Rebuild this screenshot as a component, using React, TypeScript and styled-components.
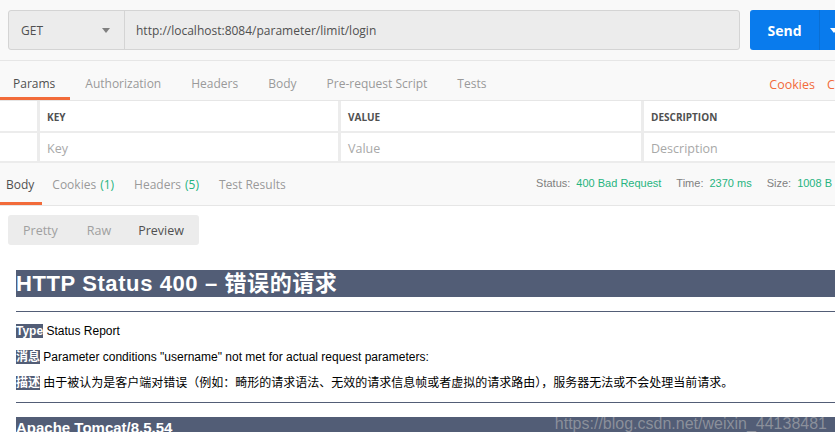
import styled, { createGlobalStyle } from "styled-components";

const GlobalStyle = createGlobalStyle`
  html, body {
    margin: 0;
    padding: 0;
    background: #ffffff;
    overflow: hidden;
  }
  * { box-sizing: border-box; }
`;

const requestTabs = ["Params", "Authorization", "Headers", "Body", "Pre-request Script", "Tests"];

export default function App() {
  return (
    <>
      <GlobalStyle />
      <Page>
        <TopBar>
          <UrlGroup>
            <MethodSelect>
              GET
              <Caret />
            </MethodSelect>
            <UrlText>http://localhost:8084/parameter/limit/login</UrlText>
          </UrlGroup>
          <SendGroup>
            <SendLabel>Send</SendLabel>
            <SendArrow>
              <Caret $color="#ffffff" />
            </SendArrow>
          </SendGroup>
        </TopBar>

        <TabRow>
          {requestTabs.map((t, i) => (
            <Tab key={t} $active={i === 0}>{t}</Tab>
          ))}
          <TabLinks>
            <OrangeLink>Cookies</OrangeLink>
            <OrangeLink>Code</OrangeLink>
          </TabLinks>
        </TabRow>

        <ParamTable>
          <Cell />
          <HeadCell>KEY</HeadCell>
          <HeadCell>VALUE</HeadCell>
          <HeadCell>DESCRIPTION</HeadCell>
          <Cell />
          <InputCell>Key</InputCell>
          <InputCell>Value</InputCell>
          <InputCell>Description</InputCell>
        </ParamTable>

        <ResponseBar>
          <ResponseTabs>
            <RespTab $active>Body</RespTab>
            <RespTab>Cookies <Count>(1)</Count></RespTab>
            <RespTab>Headers <Count>(5)</Count></RespTab>
            <RespTab>Test Results</RespTab>
          </ResponseTabs>
          <Meta>
            <MetaLabel>Status:</MetaLabel><MetaValue>400 Bad Request</MetaValue>
            <MetaLabel>Time:</MetaLabel><MetaValue>2370 ms</MetaValue>
            <MetaLabel>Size:</MetaLabel><MetaValue>1008 B</MetaValue>
          </Meta>
        </ResponseBar>

        <ResponseBody>
          <ViewToggle>
            <ViewOption>Pretty</ViewOption>
            <ViewOption>Raw</ViewOption>
            <ViewOption $active>Preview</ViewOption>
          </ViewToggle>

          <Preview>
            <ErrorTitle>HTTP Status 400 – 错误的请求</ErrorTitle>
            <Rule $top={14} $bottom={12} />
            <Para><Label>Type</Label> Status Report</Para>
            <Para><Label>消息</Label> Parameter conditions "username" not met for actual request parameters: </Para>
            <Para><Label>描述</Label> 由于被认为是客户端对错误（例如：畸形的请求语法、无效的请求信息帧或者虚拟的请求路由），服务器无法或不会处理当前请求。</Para>
            <Rule $top={2} $bottom={14} />
            <Footer>Apache Tomcat/8.5.54</Footer>
            <Watermark>https://blog.csdn.net/weixin_44138481</Watermark>
          </Preview>
        </ResponseBody>
      </Page>
    </>
  );
}

const Page = styled.div`
  width: 835px;
  height: 432px;
  overflow: hidden;
  font-family: "Open Sans", "Noto Sans", sans-serif;
  color: #505050;
`;

const TopBar = styled.div`
  display: flex;
  gap: 10px;
  height: 61px;
  padding: 10px 0 10px 8px;
  background: #f9f9f9;
  border-bottom: 1px solid #e6e6e6;
`;

const UrlGroup = styled.div`
  display: flex;
  flex: 0 0 732px;
  height: 40px;
  background: #ececec;
  border: 1px solid #d4d4d4;
  border-radius: 3px;
`;

const MethodSelect = styled.div`
  display: flex;
  align-items: center;
  justify-content: space-between;
  width: 116px;
  padding: 0 14px 0 12px;
  border-right: 1px solid #d4d4d4;
  font-size: 12px;
  color: #505050;
`;

const Caret = styled.span<{ $color?: string }>`
  width: 0;
  height: 0;
  border-left: 4px solid transparent;
  border-right: 4px solid transparent;
  border-top: 5px solid ${(p) => p.$color ?? "#808080"};
`;

const UrlText = styled.div`
  display: flex;
  align-items: center;
  padding-left: 11px;
  font-size: 12px;
  color: #505050;
`;

const SendGroup = styled.div`
  display: flex;
  flex: 0 0 100px;
  height: 40px;
  background: #097bed;
  border-radius: 3px;
  color: #ffffff;
`;

const SendLabel = styled.div`
  display: flex;
  align-items: center;
  justify-content: center;
  width: 70px;
  font-size: 14px;
  font-weight: 700;
  border-right: 1px solid #0a6fd4;
`;

const SendArrow = styled.div`
  display: flex;
  align-items: center;
  padding-left: 10px;
`;

const TabRow = styled.div`
  display: flex;
  height: 40px;
  background: #f9f9f9;
  border-bottom: 1px solid #e6e6e6;
`;

const Tab = styled.div<{ $active?: boolean }>`
  display: flex;
  align-items: center;
  padding: 8px 15px 0;
  font-size: 12px;
  color: ${(p) => (p.$active ? "#505050" : "#9a9a9a")};
  border-bottom: 3px solid ${(p) => (p.$active ? "#f26b3a" : "transparent")};
  &:first-child { padding-left: 13px; }
`;

const TabLinks = styled.div`
  display: flex;
  align-items: center;
  gap: 12px;
  margin-left: auto;
  margin-right: -22px;
  padding-top: 8px;
`;

const OrangeLink = styled.span`
  font-size: 12.5px;
  color: #f26b3a;
`;

const ParamTable = styled.div`
  display: grid;
  grid-template-columns: 37px 298px 300px 1fr;
  grid-template-rows: 30px 28px;
  gap: 2px 3px;
  background: #ececec;
  border-bottom: 2px solid #ececec;
`;

const Cell = styled.div`
  background: #ffffff;
`;

const HeadCell = styled.div`
  display: flex;
  align-items: center;
  padding: 2px 0 0 7px;
  background: #ffffff;
  font-size: 10px;
  font-weight: 700;
  color: #505050;
`;

const InputCell = styled.div`
  display: flex;
  align-items: center;
  padding: 2px 0 0 7px;
  background: #ffffff;
  font-size: 12.5px;
  color: #a8a8a8;
`;

const ResponseBar = styled.div`
  display: flex;
  justify-content: space-between;
  height: 43px;
  background: #f9f9f9;
  border-bottom: 1px solid #e6e6e6;
`;

const ResponseTabs = styled.div`
  display: flex;
`;

const RespTab = styled.div<{ $active?: boolean }>`
  display: flex;
  align-items: center;
  padding: 3px 10px 0;
  font-size: 12px;
  color: ${(p) => (p.$active ? "#505050" : "#9a9a9a")};
  border-bottom: 3px solid ${(p) => (p.$active ? "#f26b3a" : "transparent")};
  &:first-child { padding: 3px 8px 0 6px; }
`;

const Count = styled.span`
  margin-left: 4px;
  color: #26b47f;
`;

const Meta = styled.div`
  display: flex;
  align-items: center;
  padding-bottom: 3px;
  margin-right: 3px;
  font-family: "Liberation Sans", Arial, sans-serif;
  font-size: 11px;
`;

const MetaLabel = styled.span`
  color: #808080;
  margin-right: 6px;
`;

const MetaValue = styled.span`
  color: #26b47f;
  margin-right: 15px;
  &:last-child { margin-right: 0; }
`;

const ResponseBody = styled.div`
  padding: 9px 0 0 8px;
`;

const ViewToggle = styled.div`
  display: flex;
  width: 191px;
  height: 30px;
  background: #ececec;
  border-radius: 3px;
`;

const ViewOption = styled.div<{ $active?: boolean }>`
  display: flex;
  align-items: center;
  padding: 0 15px;
  font-size: 12.5px;
  color: ${(p) => (p.$active ? "#505050" : "#a0a0a0")};
  &:nth-child(2) { padding: 0 12px 0 14px; }
`;

const Preview = styled.div`
  position: relative;
  padding: 25px 0 0 8px;
  font-family: "Liberation Sans", Arial, "Noto Sans CJK SC", sans-serif;
  color: #000000;
`;

const ErrorTitle = styled.div`
  height: 27px;
  line-height: 27px;
  background: #525d76;
  color: #ffffff;
  font-size: 22px;
  font-weight: 700;
  letter-spacing: 0.6px;
  white-space: nowrap;
`;

const Rule = styled.div<{ $top: number; $bottom: number }>`
  height: 1px;
  margin: ${(p) => `${p.$top}px 0 ${p.$bottom}px`};
  background: #525d76;
`;

const Para = styled.div`
  height: 14px;
  line-height: 14px;
  margin-bottom: 12px;
  font-size: 12px;
  white-space: nowrap;
`;

const Label = styled.span`
  background: #525d76;
  color: #ffffff;
  font-weight: 700;
  font-size: 12px;
`;

const Footer = styled.div`
  height: 22px;
  line-height: 22px;
  background: #525d76;
  color: #ffffff;
  font-size: 15px;
  font-weight: 700;
`;

const Watermark = styled.div`
  position: absolute;
  right: 8px;
  bottom: 6px;
  font-family: "Liberation Sans", Arial, sans-serif;
  font-size: 16px;
  color: rgba(185, 185, 185, 0.56);
  white-space: nowrap;
`;
